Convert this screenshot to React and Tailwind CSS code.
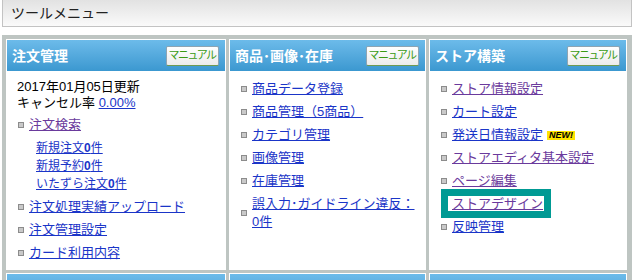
const LINK = "text-[#1a35c8] underline";
const VISITED = "text-[#6a3a9c] underline";

const Bullet = () => (
  <span className="ml-[1px] mr-[5px] w-[6px] h-[6px] shrink-0 border border-[#8c8c8c] bg-[#c9c9c9]" />
);

const Item = ({ children, visited, first, extra }) => (
  <li className={`flex items-center leading-[18px] ${first ? "" : "mt-[5px]"}`}>
    <Bullet />
    <span>
      <a href="#" className={visited ? VISITED : LINK}>
        {children}
      </a>
      {extra}
    </span>
  </li>
);

const Panel = ({ title, children }) => (
  <div className="bg-white p-[1px] pb-0 h-[231px] flex flex-col">
    <div className="h-[31px] shrink-0 bg-gradient-to-b from-[#6cbbea] to-[#3b98d0] flex items-center justify-between pl-[5px] pr-[6px]">
      <span className="text-white font-bold text-[14px] leading-none">{title}</span>
      <button className="w-[53px] h-[20px] border border-[#8fa4b2] border-b-[#6f9a52] rounded-[2px] bg-gradient-to-b from-white to-[#ececec] text-[#3a9a14] text-[11px] tracking-[-1.5px] leading-none pr-[1px]">
        マニュアル
      </button>
    </div>
    <div className="flex-1 pl-[10px] pr-[6px] text-[13px] text-black">{children}</div>
  </div>
);

const EmptyPanel = () => (
  <div className="bg-white p-[1px] h-[60px]">
    <div className="h-[31px] bg-gradient-to-b from-[#6cbbea] to-[#3b98d0]" />
  </div>
);

export default function App() {
  return (
    <div className="w-[637px] h-[280px] overflow-hidden bg-white font-['Liberation_Sans','Noto_Sans_CJK_JP',sans-serif]">
      <div className="ml-[2px] w-[630px] h-[27px] border border-t-0 border-[#c3c3c3] bg-gradient-to-b from-[#e2e2e2] to-[#fafafa] pl-[8px] flex items-center text-[14px] text-[#222]">
        ツールメニュー
      </div>

      <div className="mt-[8px] ml-[2px] w-[630px] bg-[#bec5c2] pt-[4px] pl-[4px] pr-[5px] grid grid-cols-[220px_197px_198px] gap-[3px]">
        <Panel title="注文管理">
          <p className="mt-[8px] leading-[16px]">2017年01月05日更新</p>
          <p className="leading-[16px]">
            キャンセル率 <a href="#" className={LINK}>0.00%</a>
          </p>
          <ul className="mt-[5px]">
            <Item first visited>注文検索</Item>
            <li className="mt-[5px] pl-[19px] text-[12px] leading-[18px]">
              <a href="#" className={LINK}>新規注文<b>0</b>件</a>
              <br />
              <a href="#" className={LINK}>新規予約<b>0</b>件</a>
              <br />
              <a href="#" className={LINK}>いたずら注文<b>0</b>件</a>
            </li>
            <Item>注文処理実績アップロード</Item>
            <Item>注文管理設定</Item>
            <Item>カード利用内容</Item>
          </ul>
        </Panel>

        <Panel title="商品･画像･在庫">
          <ul className="mt-[9px]">
            <Item first>商品データ登録</Item>
            <Item>商品管理（5商品）</Item>
            <Item>カテゴリ管理</Item>
            <Item>画像管理</Item>
            <Item>在庫管理</Item>
            <Item>誤入力･ガイドライン違反：0件</Item>
          </ul>
        </Panel>

        <Panel title="ストア構築">
          <ul className="mt-[9px]">
            <Item first visited>ストア情報設定</Item>
            <Item>カート設定</Item>
            <Item
              extra={
                <span className="ml-[4px] inline-block align-[1px] bg-[#ffe400] px-[2px] text-[9px] leading-[9px] font-bold italic text-black no-underline">
                  NEW!
                </span>
              }
            >
              発送日情報設定
            </Item>
            <Item visited>ストアエディタ基本設定</Item>
            <Item visited>ページ編集</Item>
            <li className="relative flex items-center leading-[18px] mt-[5px]">
              <Bullet />
              <a href="#" className={VISITED}>ストアデザイン</a>
              <div className="absolute left-[1px] top-[-6px] w-[110px] h-[29px] border-[7px] border-[#009a94]" />
            </li>
            <Item>反映管理</Item>
          </ul>
        </Panel>

        <EmptyPanel />
        <EmptyPanel />
        <EmptyPanel />
      </div>
    </div>
  );
}
